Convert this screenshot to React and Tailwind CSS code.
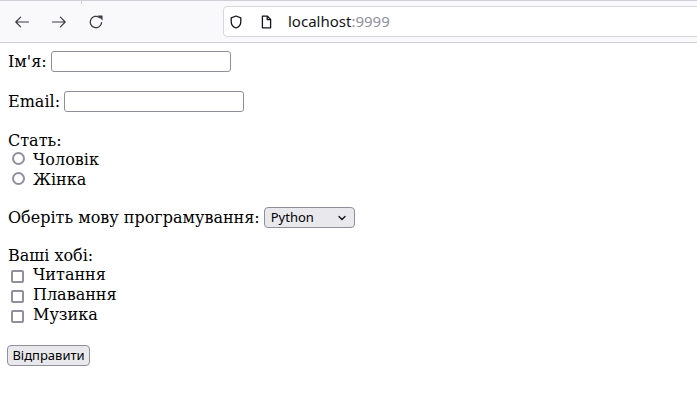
import React from 'react';

const Back = () => (
    <svg width="16" height="16" viewBox="0 0 16 16" fill="none" stroke="#3b3b45" strokeWidth="1.2" strokeLinecap="round" strokeLinejoin="round">
        <path d="M14.5 8H1.8M6.6 3.2L1.8 8l4.8 4.8" />
    </svg>
);

const Forward = () => (
    <svg width="16" height="16" viewBox="0 0 16 16" fill="none" stroke="#3b3b45" strokeWidth="1.2" strokeLinecap="round" strokeLinejoin="round">
        <path d="M1.5 8h12.7M9.4 3.2L14.2 8l-4.8 4.8" />
    </svg>
);

const Reload = () => (
    <svg width="16" height="16" viewBox="0 0 16 16" fill="none">
        <path d="M13.6 8.6A5.7 5.7 0 1 1 11.4 3.5" stroke="#3b3b45" strokeWidth="1.3" strokeLinecap="round" />
        <path d="M9.6 1.6h4.9v4.9z" fill="#3b3b45" />
    </svg>
);

const Shield = () => (
    <svg width="12" height="14" viewBox="0 0 12 14" fill="none" stroke="#15141a" strokeWidth="1.3" strokeLinejoin="round">
        <path d="M6 1L1.2 2.8v3.9C1.2 9.9 3.2 11.9 6 13c2.8-1.1 4.8-3.1 4.8-6.3V2.8z" />
    </svg>
);

const Page = () => (
    <svg width="11" height="14" viewBox="0 0 11 14" fill="none" stroke="#15141a" strokeWidth="1.3" strokeLinejoin="round">
        <path d="M1.4 1.2h5l3.2 3.2v8.4H1.4z" />
        <path d="M6.2 1.2v3.4h3.4" />
    </svg>
);

const Radio = () => (
    <span className="block w-[13px] h-[13px] rounded-full border-2 border-[#8f8f9d] bg-white" />
);

const Checkbox = () => (
    <span className="block w-[13px] h-[13px] rounded-[2px] border-2 border-[#8f8f9d] bg-white" />
);

const App = () => {
    const hobbies = ['Читання', 'Плавання', 'Музика'];

    return (
        <div className="w-[697px] h-[409px] bg-white overflow-hidden text-black">
            <header className="relative h-[43px] bg-[#f9f9fb] border-t border-b border-[#cfcfd8] flex items-center overflow-hidden">
                <div className="absolute left-[81px] top-0 w-px h-[3px] bg-[#cfcfd8]"></div>
                <div className="pl-[14px] flex items-center gap-[21px]">
                    <Back />
                    <Forward />
                    <Reload />
                </div>
                <div className="ml-[119px] w-[520px] shrink-0 h-[31px] bg-white border border-[#d7d7db] rounded-[4px] flex items-center pl-[6px] font-['Noto_Sans',sans-serif] text-[15px]">
                    <Shield />
                    <span className="ml-[19px] flex"><Page /></span>
                    <span className="ml-[16px] text-[#15141a]">localhost<span className="text-[#8f8f9d]">:9999</span></span>
                </div>
            </header>

            <form className="px-[8px] pt-[8px] font-['DejaVu_Serif',serif] text-[16px] leading-[19px]">
                <div className="h-[21px] flex items-center gap-[4px]">
                    <label>Ім'я:</label>
                    <input type="text" className="w-[180px] h-[21px] border border-[#8f8f9d] rounded-[3px] bg-white" />
                </div>

                <div className="mt-[19px] h-[21px] flex items-center gap-[4px]">
                    <label>Email:</label>
                    <input type="email" className="w-[180px] h-[21px] border border-[#8f8f9d] rounded-[3px] bg-white" />
                </div>

                <div className="mt-[20px] h-[18px] leading-[18px]">Стать:</div>
                <div className="h-[20px] flex items-start pl-[4px]">
                    <span className="mt-[2px]"><Radio /></span>
                    <span className="ml-[8px] leading-[20px]">Чоловік</span>
                </div>
                <div className="h-[20px] flex items-start pl-[4px]">
                    <span className="mt-[2px]"><Radio /></span>
                    <span className="ml-[8px] leading-[20px]">Жінка</span>
                </div>

                <div className="mt-[17px] h-[21px] flex items-center gap-[4px]">
                    <label>Оберіть мову програмування:</label>
                    <div className="w-[91px] h-[21px] bg-[#e9e9ed] border border-[#8f8f9d] rounded-[4px] flex items-center justify-between pl-[6px] pr-[8px] font-['Noto_Sans',sans-serif] text-[13px] leading-none">
                        <span>Python</span>
                        <svg width="8" height="6" viewBox="0 0 8 6" fill="none" stroke="#15141a" strokeWidth="1.4" strokeLinecap="round" strokeLinejoin="round">
                            <path d="M1 1.5l3 3 3-3" />
                        </svg>
                    </div>
                </div>

                <div className="mt-[19px] h-[18px] leading-[18px]">Ваші хобі:</div>
                {hobbies.map((h) => (
                    <div key={h} className="h-[20px] flex items-start pl-[3px]">
                        <span className="mt-[5px]"><Checkbox /></span>
                        <span className="ml-[9px] leading-[20px]">{h}</span>
                    </div>
                ))}

                <button type="button" className="mt-[20px] -ml-px w-[83px] h-[21px] bg-[#e9e9ed] border border-[#8f8f9d] rounded-[4px] flex items-center justify-center font-['Noto_Sans',sans-serif] text-[13px] leading-none text-black">
                    Відправити
                </button>
            </form>
        </div>
    );
};

export default App;
